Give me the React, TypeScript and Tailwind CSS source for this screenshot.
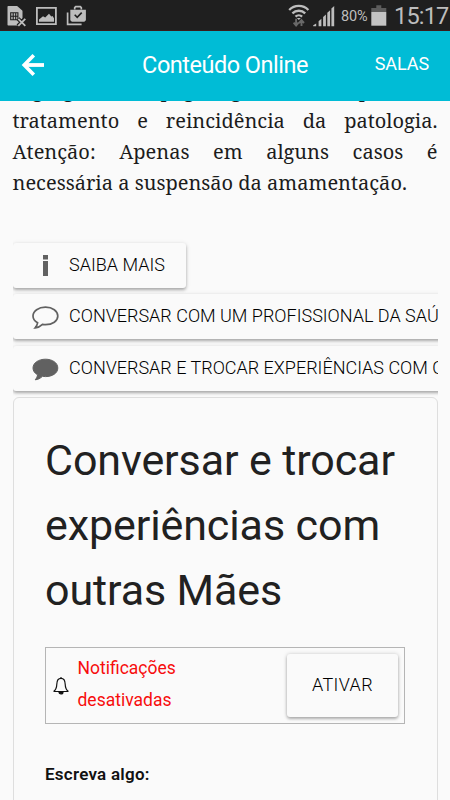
import type { ReactNode } from "react"
import { clsx } from "clsx"

function StatusBar() {
  return (
    <div className="flex h-[31px] shrink-0 items-center justify-between border-b border-[#3a1c1c] bg-[#1f1f1f] font-['Roboto',sans-serif] text-[#bdbdbd]">
      <svg width="90" height="30" viewBox="0 0 90 30" fill="none">
        {/* SIM card error */}
        <path d="M8.3 6.8h8.6l4.8 4.4V18l-3 1.5.5 5.3H8.3z" fill="#bdbdbd" stroke="#bdbdbd" strokeWidth="1.6" strokeLinejoin="round" />
        <path d="M10.7 12.7h7.2v7h-7.2zM13.2 12.7v7M15.7 12.7v7M10.7 16.2h7" stroke="#1f1f1f" strokeWidth="1.1" />
        <path d="M18 18.6l7.2 7.2M25.2 18.6L18 25.8" stroke="#1f1f1f" strokeWidth="4" />
        <path d="M18.3 18.8l7 7M25.3 18.8l-7 7" stroke="#bdbdbd" strokeWidth="1.8" />
        {/* Picture */}
        <path d="M36.9 7.8h19v16.4h-19z" stroke="#bdbdbd" strokeWidth="1.8" />
        <path d="M39 21.8v-2.3l4-3.3 2.2 1.2 3.8-3.6 2.3 2.8 1.2-.6 1.5 2.2v3.6z" fill="#bdbdbd" />
        {/* Store */}
        <path d="M67.6 12.5v11.8h14" stroke="#bdbdbd" strokeWidth="1.7" />
        <path d="M74.7 9.5V7.6l1-1h4.6l1 1v1.9" stroke="#bdbdbd" strokeWidth="1.7" />
        <path d="M70.3 9.7h15.6v10.5l-1.6 1.6H71.9l-1.6-1.6z" fill="#bdbdbd" />
        <path d="M74.7 14.8l2.5 2.5 4.5-4.7" stroke="#1f1f1f" strokeWidth="1.6" />
      </svg>
      <div className="flex h-full items-center">
        <svg width="47" height="30" viewBox="0 0 47 30" fill="none">
          {/* Wi-Fi with traffic arrows */}
          <path d="M1.2 10a13.4 13.4 0 0 1 19.2 0M4.4 13.4a9 9 0 0 1 12.8 0M7.5 16.6a4.8 4.8 0 0 1 6.6 0" stroke="#bdbdbd" strokeWidth="2.3" />
          <path d="M8.8 17.9h4l-2 2z" fill="#bdbdbd" />
          <path d="M8.1 18.8V25M5.6 22.7l2.5 2.8 2.5-2.8M13.5 25.9v-5.4M11 23l2.5-2.8L16 23" stroke="#696969" strokeWidth="1.9" />
          {/* Signal */}
          <path d="M25.2 26.3v-1l3-1.8v2.8zM30.6 21.2l2.8-2.4v7.5h-2.8zM35.1 16.9l2.8-2.4v11.8h-2.8zM39.3 12.7l2.8-2.4v16h-2.8zM43.4 8.6l2.8-2.6v20.3h-2.8z" fill="#bdbdbd" />
        </svg>
        <span className="mt-[5px] ml-[6px] w-[28px] text-[14.5px] leading-none tracking-[-0.1px]">80%</span>
        <svg className="ml-[2px]" width="17" height="30" viewBox="0 0 17 30">
          <path d="M5.3 5.3h5V8h5v4h-15V8h5z" fill="#5c5c5c" />
          <path d="M.3 12h15v13.7h-15z" fill="#c3c3c3" />
        </svg>
        <span className="mt-[3px] ml-[6px] w-[56px] text-[23.5px] leading-none tracking-[-0.8px]">15:17</span>
      </div>
    </div>
  )
}

function Header() {
  return (
    <header className="relative z-10 grid h-[70px] shrink-0 grid-cols-[1fr_auto_1fr] items-center bg-[#00bcd6] font-['Roboto',sans-serif] text-white">
      <button aria-label="Voltar" className="ml-[21px] w-6">
        <svg width="24" height="26" viewBox="0 0 24 26" fill="none" stroke="#fff">
          <path d="M12.8 2.2L3.2 12l9.6 9.8" strokeWidth="3.6" />
          <path d="M3.5 12H23" strokeWidth="3.8" />
        </svg>
      </button>
      <h1 className="text-[23.5px] leading-none tracking-[-0.5px]">Conteúdo Online</h1>
      <button className="mr-[21px] justify-self-end pb-[4px] text-[18px] leading-none tracking-[-0.1px]">SALAS</button>
    </header>
  )
}

interface ActionButtonProps {
  icon: ReactNode
  children: ReactNode
  className?: string
}

function ActionButton({ icon, children, className }: ActionButtonProps) {
  return (
    <button
      className={clsx(
        "flex h-[45px] items-center rounded-[3px] bg-[#fafafa] text-[18px] whitespace-nowrap text-black shadow-[0_2px_3px_rgba(0,0,0,0.25),0_1px_5px_rgba(0,0,0,0.14)]",
        className,
      )}
    >
      <span className="flex w-[56.5px] shrink-0 justify-center pl-[9px]">{icon}</span>
      <span className="pb-[2px] font-light">{children}</span>
    </button>
  )
}

const bubblePath =
  "M13.5 1.2C20.5 1.2 25.8 4.9 25.8 10S20.5 18.6 13.5 18.6c-1 0-2-.1-3-.3-2.1 2-4.5 3.3-7.3 3.5 1.3-1.5 2-3 2.4-5C2.6 15.2 1 12.8 1 10c0-5.1 5.5-8.8 12.5-8.8z"

export default function App() {
  return (
    <div className="flex h-[800px] w-[450px] flex-col overflow-hidden bg-[#fafafa] text-[#212121]">
      <StatusBar />
      <Header />

      <main className="-mt-[27.5px] px-[12.5px] font-['Roboto',sans-serif]">
        <div className="font-['Noto_Serif','Droid_Serif','DejaVu_Serif',serif] text-[20px] leading-[31.2px] text-[#1c1c1c]">
          <p className="[text-align-last:justify]">segregada da pega ágil e com apoio ao</p>
          <p className="[text-align-last:justify]">tratamento e reincidência da patologia.</p>
          <p className="[text-align-last:justify]">Atenção: Apenas em alguns casos é</p>
          <p>necessária a suspensão da amamentação.</p>
        </div>

        <div className="mt-[44.5px] flex flex-col items-start overflow-x-clip">
          <ActionButton
            className="w-[173px]"
            icon={
              <svg width="7" height="21" viewBox="0 0 7 21" fill="#616161">
                <path d="M1 0h5v4.5H1zM1 6h5v15H1z" />
              </svg>
            }
          >
            SAIBA MAIS
          </ActionButton>
          <ActionButton
            className="mt-[6px] w-[640px]"
            icon={
              <svg className="mt-[3px] shrink-0" width="27" height="23" viewBox="0 0 27 23">
                <path d={bubblePath} fill="none" stroke="#616161" strokeWidth="1.7" />
              </svg>
            }
          >
            CONVERSAR COM UM PROFISSIONAL DA SAÚDE
          </ActionButton>
          <ActionButton
            className="mt-[7px] w-[640px]"
            icon={
              <svg className="mt-[3px] shrink-0" width="27" height="23" viewBox="0 0 27 23">
                <path d={bubblePath} fill="#616161" stroke="#616161" />
              </svg>
            }
          >
            CONVERSAR E TROCAR EXPERIÊNCIAS COM OUTRAS MÃES
          </ActionButton>
        </div>

        <section className="mt-[6px] h-[460px] rounded-[6px] border border-[#dedede] pt-[30px] pr-[20px] pl-[31.5px]">
          <h2 className="text-[43px] leading-[65px] tracking-[-0.1px]">
            Conversar e trocar experiências com outras Mães
          </h2>

          <div className="mt-[24px] flex h-[77px] w-[360px] items-center border border-[#b5b5b5] pr-[6px] pl-[6px]">
            <svg width="18" height="19" viewBox="0 0 18 19" fill="none" stroke="#111" strokeWidth="1.2">
              <path d="M9 1v1.3M1.5 15.5h15M1.8 15.3c2.6-1.9 2.9-4 3-7C4.9 4.5 6.5 2.4 9 2.4s4.1 2.1 4.2 5.9c.1 3 .4 5.1 3 7" />
              <path d="M7 16h4c0 1.2-.8 2-2 2s-2-.8-2-2z" fill="#111" />
            </svg>
            <p className="mb-[1px] ml-[7.5px] w-[140px] text-[17.5px] leading-[31.5px] text-[#f70d0d]">
              Notificações desativadas
            </p>
            <button className="ml-auto h-[63px] w-[111px] rounded-[3px] bg-[#fafafa] pb-[2px] text-[18px] font-light tracking-[0.4px] text-black shadow-[0_2px_3px_rgba(0,0,0,0.25),0_0_4px_rgba(0,0,0,0.18)]">
              ATIVAR
            </button>
          </div>

          <label className="mt-[38px] block text-[17px] leading-[24px] font-semibold tracking-[0.25px] text-[#111]">Escreva algo:</label>
        </section>
      </main>
    </div>
  )
}
